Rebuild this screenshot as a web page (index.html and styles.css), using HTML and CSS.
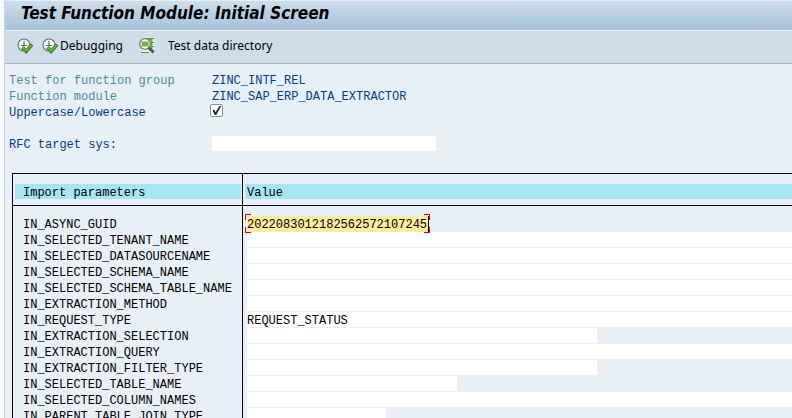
FILE: index.html
```html
<!DOCTYPE html>
<html lang="en">
<head>
<meta charset="utf-8">
<title>Test Function Module: Initial Screen</title>
<link rel="stylesheet" href="styles.css">
</head>
<body>
<svg class="defs" aria-hidden="true">
  <symbol id="execute" viewBox="0 0 16 16">
    <circle cx="7" cy="7" r="6" fill="#fff" stroke="#707070" stroke-width="1.1"/>
    <path d="M7 3v5M4 7.500h6" fill="none" stroke="#666" stroke-width="1.200"/>
    <path d="M7 1v1.500M1 7h1.500M7 11.500v1.500M11.500 7h1.500" stroke="#999"/>
    <path d="M5.500 9.300l3.700 4L15 6.500" fill="none" stroke="#2f7f20" stroke-width="3.600"/>
    <path d="M6 9.500l3.200 3.300L14.500 7" fill="none" stroke="#67bd3a" stroke-width="1.800"/>
  </symbol>
  <symbol id="directory" viewBox="0 0 16 16">
    <path d="M2 .5h13v14H3z" fill="#f4f8ef"/>
    <path d="M7 1h5M12.500 1v13" stroke="#5fac35" stroke-width="2"/>
    <path d="M12 .5h3M12 4.500h3M12 8.500h3M12 12.500h3M2 14.500h8" stroke="#4c9828"/>
    <circle cx="6" cy="6" r="5.300" fill="#fff" stroke="#777" stroke-width="1.300"/>
    <path d="M2.500 3.500h7v5h-7z" fill="#6cb83d"/>
    <path d="M9.500 9.500l5 5" stroke="#555" stroke-width="2.800"/>
  </symbol>
</svg>
<main class="window">
  <header class="titlebar"><h1>Test Function Module: Initial Screen</h1></header>
  <nav class="toolbar" aria-label="Application toolbar">
    <button type="button" aria-label="Execute"><svg><use href="#execute"/></svg></button>
    <button type="button"><svg><use href="#execute"/></svg><span>Debugging</span></button>
    <button type="button" class="directory"><svg><use href="#directory"/></svg><span>Test data directory</span></button>
  </nav>
  <form>
    <section class="details">
      <span class="muted">Test for function group</span><span>ZINC_INTF_REL</span>
      <span class="muted">Function module</span><span>ZINC_SAP_ERP_DATA_EXTRACTOR</span>
      <label for="case">Uppercase/Lowercase</label><span class="tick"><input type="checkbox" id="case" checked></span>
      <label class="target" for="rfc">RFC target sys:</label><input class="target field" type="text" id="rfc">
    </section>
    <table>
      <thead><tr><th scope="col"><div>Import parameters</div></th><th scope="col"><div>Value</div></th></tr></thead>
      <tbody>
        <tr><td><label for="p1">IN_ASYNC_GUID</label></td><td><div class="focused"><input type="text" id="p1" value="2022083012182562572107245"><i></i><i></i><i></i><i></i></div></td></tr>
        <tr><td><label for="p2">IN_SELECTED_TENANT_NAME</label></td><td><input type="text" id="p2"></td></tr>
        <tr><td><label for="p3">IN_SELECTED_DATASOURCENAME</label></td><td><input type="text" id="p3"></td></tr>
        <tr><td><label for="p4">IN_SELECTED_SCHEMA_NAME</label></td><td><input type="text" id="p4"></td></tr>
        <tr><td><label for="p5">IN_SELECTED_SCHEMA_TABLE_NAME</label></td><td><input type="text" id="p5"></td></tr>
        <tr><td><label for="p6">IN_EXTRACTION_METHOD</label></td><td><input type="text" id="p6"></td></tr>
        <tr><td><label for="p7">IN_REQUEST_TYPE</label></td><td><input type="text" id="p7" value="REQUEST_STATUS"></td></tr>
        <tr><td><label for="p8">IN_EXTRACTION_SELECTION</label></td><td><input class="long" type="text" id="p8"></td></tr>
        <tr><td><label for="p9">IN_EXTRACTION_QUERY</label></td><td><input type="text" id="p9"></td></tr>
        <tr><td><label for="p10">IN_EXTRACTION_FILTER_TYPE</label></td><td><input class="long" type="text" id="p10"></td></tr>
        <tr><td><label for="p11">IN_SELECTED_TABLE_NAME</label></td><td><input class="medium" type="text" id="p11"></td></tr>
        <tr><td><label for="p12">IN_SELECTED_COLUMN_NAMES</label></td><td><input type="text" id="p12"></td></tr>
        <tr><td><label for="p13">IN_PARENT_TABLE_JOIN_TYPE</label></td><td><input class="short" type="text" id="p13"></td></tr>
      </tbody>
    </table>
  </form>
</main>
</body>
</html>
```

FILE: styles.css
```css
* { box-sizing: border-box; }

body {
  margin: 0;
  height: 100vh;
  overflow: hidden;
  background: #fafbfd;
  color: #000;
  font: 12px/18px "Liberation Mono", monospace;
}

.defs { display: none; }

.window {
  margin-left: 4px;
  min-height: 100vh;
  border-left: 1px solid #ccd6e6;
  background: #e8eff6;
}

.titlebar {
  height: 31px;
  padding: 0 16px;
  border-top: 1px solid #e8eff6;
  border-bottom: 1px solid #edf3f8;
  background: linear-gradient(#cfdeeb, #b9cee1 50%, #a9c2da);
}

h1 {
  margin: 0;
  font: italic bold 17px/25px "DejaVu Sans Condensed", "DejaVu Sans", sans-serif;
  white-space: nowrap;
}

.toolbar {
  display: flex;
  align-items: center;
  gap: 9px;
  height: 33px;
  padding: 0 12px 2px;
  border-bottom: 1px solid #a5b7c7;
  background: #cfdde8;
}

.toolbar button {
  display: flex;
  align-items: center;
  gap: 2px;
  padding: 0;
  border: 0;
  background: none;
  color: #000;
  font: 12px/16px "Noto Sans", sans-serif;
  white-space: nowrap;
}

.toolbar svg { width: 16px; height: 16px; }
.toolbar .directory { gap: 13px; margin-left: 7px; }

.details {
  display: grid;
  grid-template-columns: 203px 1fr;
  grid-auto-rows: 16px;
  padding: 8px 4px 0;
  color: #003d8a;
}

.muted { color: #4b8c99; }
.target { margin-top: 16px; }

input {
  display: block;
  width: 100%;
  height: 15px;
  margin: 0;
  padding: 2px 0 0;
  border: 0;
  border-radius: 0;
  outline: 0;
  background: #fff;
  color: #000;
  font: inherit;
}

.field { width: 224px; }
.tick { margin-left: -2px; }

input[type="checkbox"] {
  appearance: none;
  width: 13px;
  height: 13px;
  padding: 0;
  border: 1px solid #8c8f93;
  border-radius: 2px;
}

input[type="checkbox"]:checked::after {
  content: "";
  display: block;
  width: 11px;
  height: 11px;
  background: #24243c;
  clip-path: polygon(14% 48%, 30% 43%, 42% 65%, 76% 10%, 92% 10%, 48% 92%, 34% 92%);
}

table {
  width: calc(100% - 7px);
  margin: 37px 0 0 7px;
  border-spacing: 0;
  border-top: 1px solid #000;
  table-layout: fixed;
}

th, td {
  padding: 0 0 0 10px;
  border-left: 1px solid #000;
  vertical-align: top;
  text-align: left;
  white-space: nowrap;
}

th:first-child { width: 230px; }
td { height: 16px; }
td + td { padding-left: 4px; }

th {
  padding: 10px 1px 6px 2px;
  border-bottom: 1px solid #000;
  font-weight: normal;
}

th + th { padding-right: 0; }
th div { height: 15px; padding-left: 8px; background: #a5e5f4; }
th + th div { padding-left: 2px; }
tbody tr:first-child td { padding-top: 10px; }
label { display: block; height: 16px; }

.long { width: 350px; }
.medium { width: 210px; }
.short { width: 139px; }

.focused {
  position: relative;
  width: 182px;
  height: 16px;
}

.focused input {
  height: 16px;
  background: #ffeb9c;
}

/* Corner brackets of the active field */
.focused i {
  position: absolute;
  width: 6px;
  height: 6px;
  border: 0 solid #e00010;
  pointer-events: none;
}

.focused i:nth-of-type(1) { top: -2px; left: -2px; border-width: 1px 0 0 1px; }
.focused i:nth-of-type(2) { top: -2px; right: -1px; border-width: 1px 1px 0 0; }
.focused i:nth-of-type(3) { bottom: -1px; left: -2px; border-width: 0 0 1px 1px; }
.focused i:nth-of-type(4) { bottom: -1px; right: -1px; border-width: 0 1px 1px 0; }

/* Text caret */
.focused::after {
  content: "";
  position: absolute;
  top: 0;
  right: 0;
  width: 1px;
  height: 16px;
  background: #000;
}
```
